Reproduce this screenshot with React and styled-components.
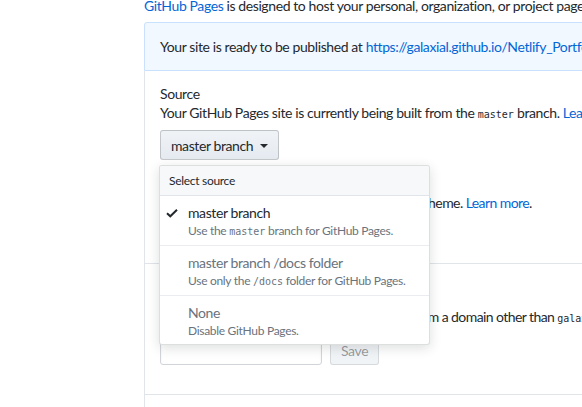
import React from 'react'
import styled, { createGlobalStyle } from 'styled-components'

const GlobalStyle = createGlobalStyle`
  html, body {
    margin: 0;
    padding: 0;
    background: #fff;
    overflow: hidden;
  }
  body {
    font-family: Lato, "Liberation Sans", sans-serif;
    font-size: 14px;
    letter-spacing: -0.4px;
    color: #24292e;
  }
`

const Page = styled.div`
  padding-left: 144px;
  margin-top: -5px;
  width: 720px;
`

const Intro = styled.p`
  margin: 0 0 6px;
  line-height: 21px;
  white-space: nowrap;
`

const Link = styled.a`
  color: #0366d6;
  text-decoration: none;
`

const Code = styled.code`
  font-family: "DejaVu Sans Mono", "Liberation Mono", monospace;
  font-size: 10px;
  letter-spacing: 0;
`

const Flash = styled.div`
  box-sizing: border-box;
  height: 49px;
  display: flex;
  align-items: center;
  padding: 0 15px;
  background: #f1f8ff;
  border: 1px solid #c8e1ff;
  border-radius: 3px 0 0 0;
  white-space: nowrap;
`

const Panel = styled.div`
  border-left: 1px solid #e1e4e8;
`

const Section = styled.div`
  padding: ${p => p.$top || 13}px 15px ${p => p.$bottom || 17}px;
  border-bottom: 1px solid #e1e4e8;
  min-height: ${p => p.$min || 0}px;
`

const Heading = styled.h3`
  margin: ${p => p.$gap || 0}px 0 0;
  font-size: 14px;
  font-weight: normal;
  line-height: 19px;
`

const Note = styled.p`
  margin: 0;
  line-height: 19px;
  white-space: nowrap;
  letter-spacing: ${p => (p.$tight ? '-0.58px' : '-0.4px')};
`

const Anchor = styled.div`
  position: relative;
  margin-top: ${p => p.$gap || 6}px;
`

const Button = styled.button`
  box-sizing: border-box;
  height: ${p => p.$h || 30}px;
  padding: 0 ${p => p.$px || 10}px;
  display: inline-flex;
  align-items: center;
  gap: 7px;
  font-family: inherit;
  font-size: 14px;
  letter-spacing: -0.4px;
  color: ${p => (p.disabled ? 'rgba(36,41,46,0.45)' : '#24292e')};
  background: ${p => (p.disabled ? '#f1f4f7' : 'linear-gradient(-180deg, #f0f3f6 0%, #e6ebf1 90%)')};
  border: 1px solid ${p => (p.disabled ? 'rgba(27,31,35,0.12)' : 'rgba(27,31,35,0.2)')};
  border-radius: 3px;
`

const Caret = styled.span`
  width: 0;
  height: 0;
  border-left: 4px solid transparent;
  border-right: 4px solid transparent;
  border-top: 4px solid #24292e;
  margin-top: 1px;
`

const Menu = styled.div`
  position: absolute;
  top: 35px;
  left: -1px;
  width: 269px;
  background: #fff;
  border: 1px solid rgba(27,31,35,0.15);
  border-radius: 3px;
  box-shadow: 0 3px 12px rgba(27,31,35,0.15);
  overflow: hidden;
  z-index: 2;
`

const MenuHeader = styled.div`
  box-sizing: border-box;
  height: 30px;
  display: flex;
  align-items: center;
  padding: 0 9px;
  font-size: 12px;
  letter-spacing: -0.3px;
  color: #24292e;
  background: #f6f8fa;
  border-bottom: 1px solid #e1e4e8;
`

const Item = styled.div`
  display: flex;
  padding: 8px 8px 5px 6px;
  border-bottom: ${p => (p.$last ? 'none' : '1px solid #eaecef')};
`

const CheckSlot = styled.div`
  width: 22px;
  flex: none;
`

const ItemTitle = styled.div`
  font-size: 14px;
  line-height: 18px;
  color: ${p => (p.$muted ? '#6a737d' : '#24292e')};
`

const ItemDesc = styled.div`
  font-size: 12px;
  letter-spacing: -0.3px;
  line-height: 17px;
  color: #6a737d;
`

const Row = styled.div`
  display: flex;
  gap: 8px;
  margin-top: 8px;
`

const Input = styled.input`
  box-sizing: border-box;
  width: 162px;
  height: 29px;
  border: 1px solid #d1d5da;
  border-radius: 3px;
  box-shadow: inset 0 1px 2px rgba(27,31,35,0.075);
  background: #fff;
`

const Check = () => (
  <svg width="12" height="9" viewBox="0 0 12 9">
    <polyline points="1,4.2 4.3,7.3 11,0.8" fill="none" stroke="#24292e" strokeWidth="2" />
  </svg>
)

const options = [
  { title: 'master branch', desc: <>Use the <Code>master</Code> branch for GitHub Pages.</>, selected: true },
  { title: 'master branch /docs folder', desc: <>Use only the <Code>/docs</Code> folder for GitHub Pages.</> },
  { title: 'None', desc: 'Disable GitHub Pages.' },
]

export default function App() {
  return (
    <>
      <GlobalStyle />
      <Page>
        <Intro>
          <Link>GitHub Pages</Link> is designed to host your personal, organization, or project pages from a GitHub repository.
        </Intro>
        <Flash>
          Your site is ready to be published at&nbsp;<Link>https://galaxial.github.io/Netlify_Portfolio/</Link>
        </Flash>
        <Panel>
          <Section>
            <Heading>Source</Heading>
            <Note>
              Your GitHub Pages site is currently being built from the <Code>master</Code> branch. <Link>Learn more</Link>.
            </Note>
            <Anchor>
              <Button>
                master branch <Caret />
              </Button>
              <Menu>
                <MenuHeader>Select source</MenuHeader>
                {options.map((o, i) => (
                  <Item key={o.title} $last={i === options.length - 1}>
                    <CheckSlot>{o.selected && <Check />}</CheckSlot>
                    <div>
                      <ItemTitle $muted={!o.selected}>{o.title}</ItemTitle>
                      <ItemDesc>{o.desc}</ItemDesc>
                    </div>
                  </Item>
                ))}
              </Menu>
            </Anchor>
            <Heading $gap={14}>Theme Chooser</Heading>
            <Note $tight>
              Select a theme to publish your site with a Jekyll theme. <Link>Learn more</Link>.
            </Note>
            <Anchor $gap={4}>
              <Button>Choose a theme</Button>
            </Anchor>
          </Section>
          <Section $top={24} $bottom={29}>
            <Heading>Custom domain</Heading>
            <Note $tight>
              Custom domain allows you to serve your site from a domain other than <Code>galaxial.github.io</Code>. <Link>Learn more</Link>.
            </Note>
            <Row>
              <Input />
              <Button disabled $h={29}>Save</Button>
            </Row>
          </Section>
          <Section $min={40} />
        </Panel>
      </Page>
    </>
  )
}
